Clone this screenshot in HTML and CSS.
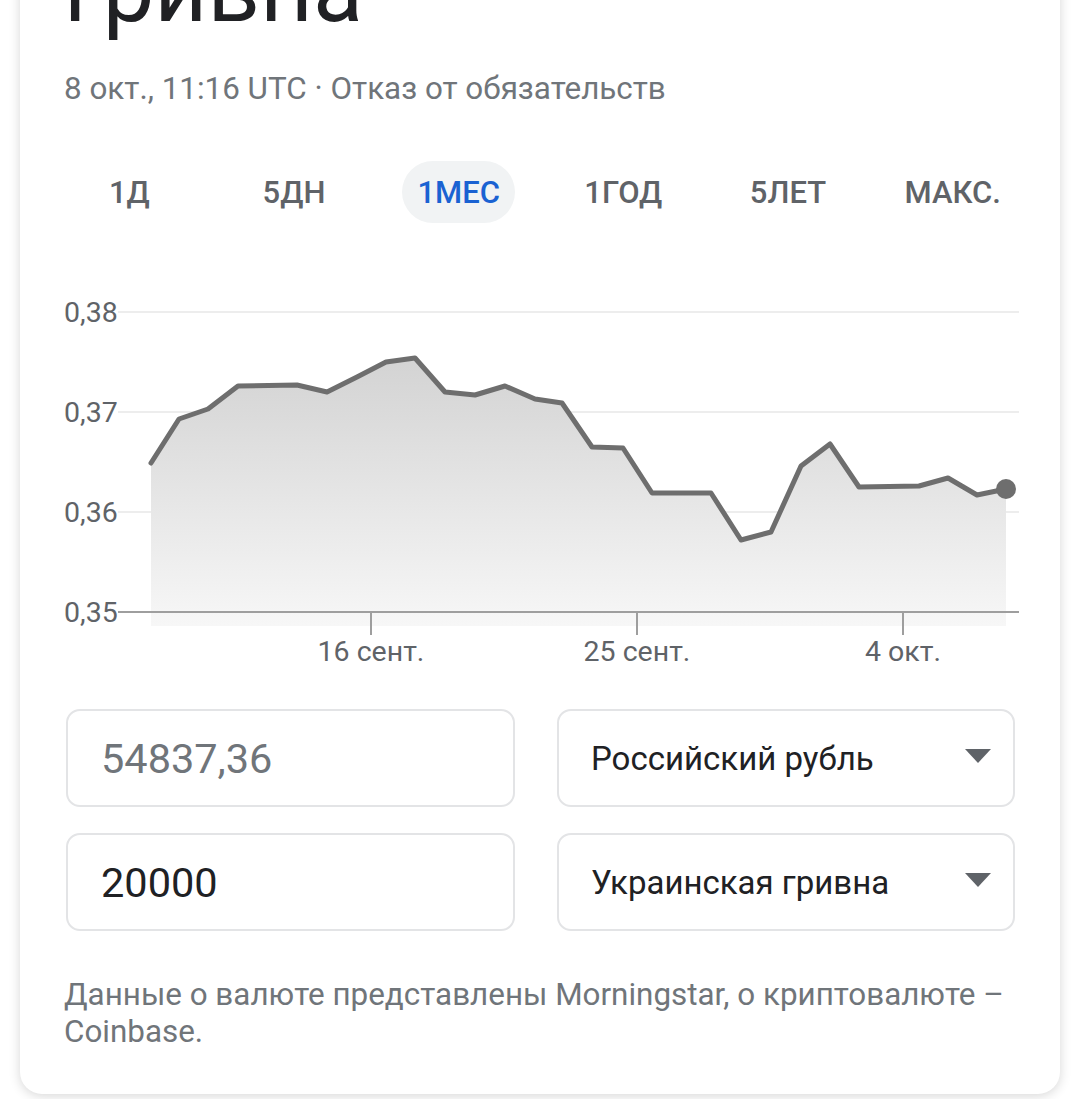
FILE: index.html
```html
<!DOCTYPE html>
<html lang="ru">
<head>
<meta charset="utf-8">
<title>Конвертер валют</title>
<link rel="stylesheet" href="styles.css">
</head>
<body>
<main class="card">
  <h1 class="title">гривна</h1>
  <p class="subtitle">8 окт., 11:16 UTC · Отказ от обязательств</p>

  <nav class="tabs">
    <div class="tab"><span class="tab-label">1Д</span></div>
    <div class="tab"><span class="tab-label">5ДН</span></div>
    <div class="tab"><span class="tab-label tab-active">1МЕС</span></div>
    <div class="tab"><span class="tab-label">1ГОД</span></div>
    <div class="tab"><span class="tab-label">5ЛЕТ</span></div>
    <div class="tab"><span class="tab-label">МАКС.</span></div>
  </nav>

  <svg class="chart" width="1040" height="390" viewBox="20 280 1040 390" xmlns="http://www.w3.org/2000/svg">
    <defs>
      <linearGradient id="fillGrad" x1="0" y1="357" x2="0" y2="625" gradientUnits="userSpaceOnUse">
        <stop offset="0" stop-color="#d3d3d3"/>
        <stop offset="1" stop-color="#f7f7f7"/>
      </linearGradient>
    </defs>
    <g class="grid">
      <line x1="118" y1="311" x2="1019" y2="311"/>
      <line x1="118" y1="411" x2="1019" y2="411"/>
      <line x1="118" y1="511" x2="1019" y2="511"/>
    </g>
    <polygon fill="url(#fillGrad)" points="151,462 179,418 208,408 238,385 297,384 327,391 357,376 386,361 415,357 445,391 475,394 505,385 535,398 562,402 592,446 623,447 652,492 711,492 741,539 771,531 801,465 830,443 859,486 919,485 948,477 977,494 1006,488 1006,625 151,625"/>
    <g class="axis">
      <line x1="118" y1="611" x2="1019" y2="611"/>
      <line x1="371" y1="611" x2="371" y2="634"/>
      <line x1="637" y1="611" x2="637" y2="634"/>
      <line x1="903" y1="611" x2="903" y2="634"/>
    </g>
    <polyline class="price" points="151,462 179,418 208,408 238,385 297,384 327,391 357,376 386,361 415,357 445,391 475,394 505,385 535,398 562,402 592,446 623,447 652,492 711,492 741,539 771,531 801,465 830,443 859,486 919,485 948,477 977,494 1006,488"/>
    <circle class="dot" cx="1006" cy="488" r="10"/>
    <g class="ylabels">
      <text x="64" y="321">0,38</text>
      <text x="64" y="421">0,37</text>
      <text x="64" y="521">0,36</text>
      <text x="64" y="621">0,35</text>
    </g>
    <g class="xlabels">
      <text x="371" y="660">16 сент.</text>
      <text x="637" y="660">25 сент.</text>
      <text x="903" y="660">4 окт.</text>
    </g>
  </svg>

  <section class="converter">
    <div class="field"><span class="amount amount-muted">54837,36</span></div>
    <div class="field select"><span class="currency">Российский рубль</span><span class="caret"></span></div>
    <div class="field"><span class="amount">20000</span></div>
    <div class="field select"><span class="currency">Украинская гривна</span><span class="caret"></span></div>
  </section>

  <p class="footnote">Данные о валюте представлены Morningstar, о криптовалюте – Coinbase.</p>
</main>
</body>
</html>
```

FILE: styles.css
```css
html, body {
  margin: 0;
  padding: 0;
  background: #ffffff;
  overflow: hidden;
}

body {
  width: 1080px;
  height: 1099px;
  font-family: Roboto, "Noto Sans", "Liberation Sans", sans-serif;
  color: #202124;
}

.card {
  margin-left: 20px;
  width: 1040px;
  box-sizing: border-box;
  padding: 0 44px 44px 44px;
  background: #fff;
  border-radius: 0 0 22px 22px;
  box-shadow: 0 2px 12px rgba(0, 0, 0, 0.16);
}

.title {
  margin: -56px 0 0 0;
  font-size: 92px;
  line-height: 92px;
  font-weight: 400;
  color: #202124;
}

.subtitle {
  margin: 35px 0 0 0;
  font-size: 31.4px;
  line-height: 36px;
  color: #70757a;
}

.tabs {
  margin: 54px -19px 0 -17px;
  display: grid;
  grid-template-columns: repeat(6, 1fr);
  height: 62px;
}

.tab {
  display: flex;
  justify-content: center;
  align-items: center;
}

.tab-label {
  display: flex;
  align-items: center;
  height: 62px;
  padding: 0 15px;
  border-radius: 31px;
  font-size: 31px;
  font-weight: 500;
  color: #5f6368;
}

.tab-active {
  background: #f1f3f4;
  color: #1a62d2;
}

.chart {
  display: block;
  margin: 58px 0 0 -44px;
}

.grid line {
  stroke: #ededed;
  stroke-width: 2;
}

.axis line {
  stroke: #9e9e9e;
  stroke-width: 2;
}

.price {
  fill: none;
  stroke: #6e6e6e;
  stroke-width: 5;
  stroke-linejoin: round;
  stroke-linecap: round;
}

.dot {
  fill: #6e6e6e;
}

.ylabels text,
.xlabels text {
  font-family: Roboto, "Noto Sans", sans-serif;
  font-size: 28.5px;
  fill: #5f6368;
}

.xlabels text {
  text-anchor: middle;
}

.converter {
  margin: 38px 1px 0 2px;
  display: grid;
  grid-template-columns: 449px 1fr;
  grid-auto-rows: 98px;
  column-gap: 42px;
  row-gap: 26px;
}

.field {
  box-sizing: border-box;
  border: 2px solid #e3e4e6;
  border-radius: 14px;
  display: flex;
  align-items: center;
  padding: 0 33px;
}

.select {
  justify-content: space-between;
  padding: 0 22px 0 32px;
}

.amount {
  font-size: 41.5px;
  color: #202124;
}

.amount-muted {
  color: #70757a;
}

.currency {
  font-size: 33px;
  color: #202124;
}

.caret {
  width: 0;
  height: 0;
  border-left: 13px solid transparent;
  border-right: 13px solid transparent;
  border-top: 14px solid #5f6368;
  margin-top: -4px;
}

.footnote {
  margin: 45px 0 0 0;
  font-size: 31.4px;
  line-height: 37px;
  color: #70757a;
}
```
